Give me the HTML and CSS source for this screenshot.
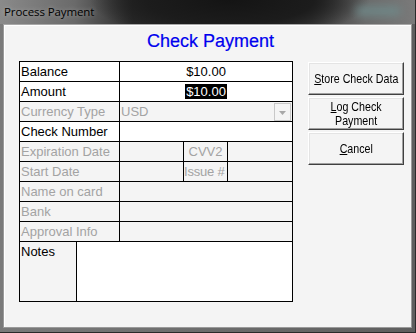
FILE: index.html
```html
<!DOCTYPE html>
<html>
<head>
<meta charset="utf-8">
<link rel="stylesheet" href="styles.css">
</head>
<body>
<div class="window">
  <div class="titlebar">
    <span class="title">Process Payment</span>
    <span class="glow"></span>
  </div>
  <div class="client">
    <div class="heading">Check Payment</div>
    <div class="content">
      <table class="form">
        <colgroup>
          <col class="c1"><col class="c2"><col class="c3"><col class="c4">
        </colgroup>
        <tr>
          <td class="lbl">Balance</td>
          <td class="val center" colspan="3">$10.00</td>
        </tr>
        <tr>
          <td class="lbl">Amount</td>
          <td class="val center" colspan="3"><span class="sel">$10.00</span></td>
        </tr>
        <tr>
          <td class="lbl dis">Currency Type</td>
          <td class="dis combo" colspan="3"><div class="combo-row"><span>USD</span><span class="arrow"><svg width="15" height="16" viewBox="0 0 15 16"><path d="M4 7h7l-3.5 4z" fill="#a8a8a8"/></svg></span></div></td>
        </tr>
        <tr>
          <td class="lbl">Check Number</td>
          <td class="val" colspan="3"></td>
        </tr>
        <tr>
          <td class="lbl dis">Expiration Date</td>
          <td class="dis"></td>
          <td class="dis center">CVV2</td>
          <td class="dis"></td>
        </tr>
        <tr>
          <td class="lbl dis">Start Date</td>
          <td class="dis"></td>
          <td class="dis tight">Issue #</td>
          <td class="dis"></td>
        </tr>
        <tr>
          <td class="lbl dis">Name on card</td>
          <td class="dis" colspan="3"></td>
        </tr>
        <tr>
          <td class="lbl dis">Bank</td>
          <td class="dis" colspan="3"></td>
        </tr>
        <tr>
          <td class="lbl dis">Approval Info</td>
          <td class="dis" colspan="3"></td>
        </tr>
        <tr class="notes-row">
          <td colspan="4" class="notes-cell">
            <div class="notes">
              <div class="notes-lbl">Notes</div>
              <div class="notes-val"></div>
            </div>
          </td>
        </tr>
      </table>
      <div class="buttons">
        <button class="btn"><span class="cap"><u>S</u>tore Check Data</span></button>
        <button class="btn"><span class="cap"><u>L</u>og Check<br>Payment</span></button>
        <button class="btn"><span class="cap"><u>C</u>ancel</span></button>
      </div>
    </div>
  </div>
</div>
</body>
</html>
```
FILE: styles.css
```css
html, body {
  margin: 0;
  padding: 0;
}
body {
  width: 416px;
  height: 333px;
  overflow: hidden;
  background: #6a6a6a;
}
.window {
  width: 416px;
  height: 333px;
  display: flex;
  flex-direction: column;
  background: linear-gradient(90deg, #7a7a7a 0%, #5e5e5e 100%);
  box-sizing: border-box;
  border-right: 1px solid #2a2a2a;
  border-bottom: 1px solid #2a2a2a;
}
.titlebar {
  height: 24px;
  position: relative;
  background:
    radial-gradient(ellipse 140px 40px at 230px 0px, #141414 0%, #1c1c1c 60%, rgba(30,30,30,0) 100%),
    linear-gradient(90deg, #8a8a8a 0%, #6a6a6a 18%, #2a2a2a 32%, #1e1e1e 55%, #3a3a3a 75%, #6a6a6a 88%, #7a7a7a 100%);
  display: flex;
  align-items: center;
  flex-shrink: 0;
}
.title {
  font-family: "Open Sans", "Noto Sans", sans-serif;
  font-size: 11.5px;
  color: #000;
  padding-left: 4px;
  margin-top: -2px;
  text-shadow: 0 0 5px rgba(255,255,255,0.4);
  letter-spacing: -0.1px;
}
.glow {
  position: absolute;
  left: 355px;
  top: 6px;
  width: 46px;
  height: 10px;
  border-radius: 6px;
  background: #6f8c8c;
  filter: blur(4px);
  opacity: 0.8;
}
.client {
  margin: 0 3px 4px 3px;
  flex: 1;
  background: #f4f4f4;
  border: 1px solid #9a9a9a;
  border-top-color: #a8a8a8;
  box-shadow: inset 1px 1px 0 #ffffff;
  display: flex;
  flex-direction: column;
}
.heading {
  height: 36px;
  box-sizing: border-box;
  padding-top: 6px;
  padding-left: 6px;
  text-align: center;
  font-family: "Liberation Sans", Arial, sans-serif;
  font-size: 18px;
  color: #0000ee;
  -webkit-text-stroke: 0.2px #0000ee;
}
.content {
  display: flex;
  align-items: flex-start;
  padding-left: 15px;
}
.form {
  border-collapse: collapse;
  width: 273px;
  table-layout: fixed;
  font-family: "Liberation Sans", Arial, sans-serif;
  font-size: 13px;
  color: #000;
}
.c1 { width: 100px; }
.c2 { width: 64px; }
.c3 { width: 44px; }
.c4 { width: 65px; }
.form td {
  border: 1px solid #000;
  height: 19px;
  padding: 0 0 0 1px;
  line-height: 17px;
  white-space: nowrap;
  overflow: hidden;
  vertical-align: middle;
  background: #f4f4f4;
}
.form td.lbl {
  background: #ffffff;
}
.form td.val {
  background: #ffffff;
}
.form td.dis {
  color: #a3a3a3;
  background: #f4f4f4;
}
.form td.center {
  text-align: center;
  padding: 0;
}
.form td.tight {
  padding: 0;
  letter-spacing: -0.2px;
}
.sel {
  background: #000;
  color: #fff;
  padding: 0 1px;
  display: inline-block;
  line-height: 15px;
}
.combo-row {
  display: flex;
  justify-content: space-between;
  align-items: center;
}
.arrow {
  width: 15px;
  height: 16px;
  border: 1px solid #c8c8c8;
  background: #f4f4f4;
  margin-right: 1px;
  display: flex;
}
.form td.notes-cell {
  padding: 0;
  height: 59px;
  background: #fff;
  vertical-align: top;
}
.notes {
  display: flex;
  height: 59px;
}
.notes-lbl {
  width: 55px;
  border-right: 1px solid #000;
  background: #f4f4f4;
  padding-left: 1px;
  line-height: 17px;
  padding-top: 1px;
}
.notes-val {
  flex: 1;
  background: #fff;
}
.buttons {
  margin-left: 15px;
  display: flex;
  flex-direction: column;
  gap: 2px;
  padding-top: 1px;
}
.btn {
  width: 96px;
  height: 33px;
  box-sizing: border-box;
  font-family: "Liberation Sans", Arial, sans-serif;
  font-size: 13px;
  line-height: 14px;
  color: #000;
  background: #f4f4f4;
  border: 1px solid;
  border-color: #ffffff #404040 #404040 #ffffff;
  box-shadow: inset -1px -1px 0 #a0a0a0, inset 1px 1px 0 #e4e4e4;
  padding: 0;
  text-align: center;
  white-space: nowrap;
  display: flex;
  align-items: center;
  justify-content: center;
  overflow: hidden;
}
.cap {
  display: inline-block;
  transform: scaleX(0.82);
  line-height: 14px;
}
.btn u {
  text-decoration: underline;
  text-underline-offset: 1px;
}
```
